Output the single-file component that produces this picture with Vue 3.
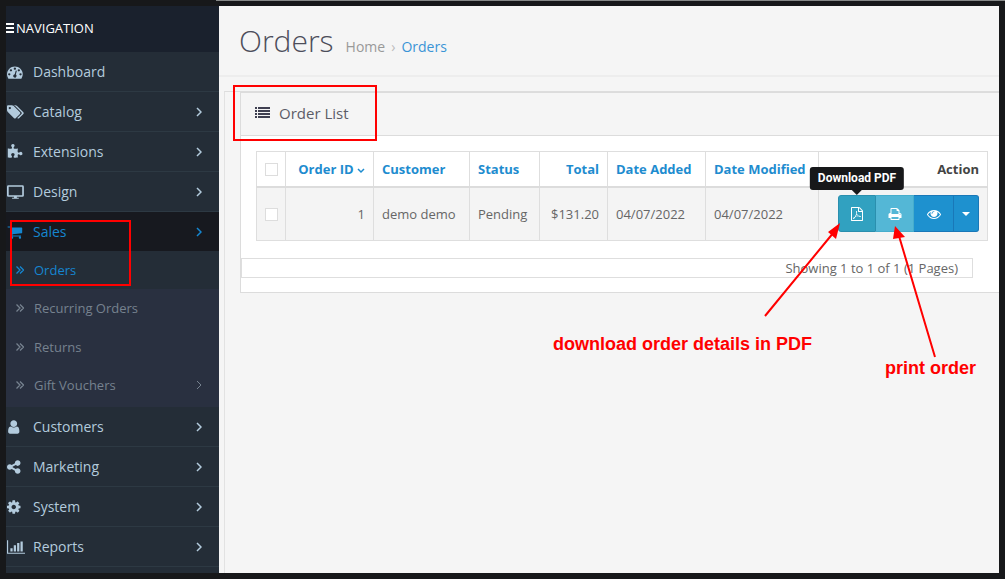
<script setup>
import { ref } from 'vue'

const icons = {
  dashboard: 'M384 1152q0-53-37.5-90.5t-90.5-37.5-90.5 37.5-37.5 90.5 37.5 90.5 90.5 37.5 90.5-37.5 37.5-90.5zm192-448q0-53-37.5-90.5t-90.5-37.5-90.5 37.5-37.5 90.5 37.5 90.5 90.5 37.5 90.5-37.5 37.5-90.5zm428 481l101-382q6-26-7.5-48.5t-38.5-29.5-48 6.5-30 39.5l-101 382q-60 5-107 43.5t-63 98.5q-20 77 20 146t117 89 146-20 89-117q16-60-6-117t-72-91zm660-33q0-53-37.5-90.5t-90.5-37.5-90.5 37.5-37.5 90.5 37.5 90.5 90.5 37.5 90.5-37.5 37.5-90.5zm-640-640q0-53-37.5-90.5t-90.5-37.5-90.5 37.5-37.5 90.5 37.5 90.5 90.5 37.5 90.5-37.5 37.5-90.5zm448 192q0-53-37.5-90.5t-90.5-37.5-90.5 37.5-37.5 90.5 37.5 90.5 90.5 37.5 90.5-37.5 37.5-90.5zm320 448q0 261-141 483-19 29-54 29h-1402q-35 0-54-29-141-221-141-483 0-182 71-348t191-286 286-191 348-71 348 71 286 191 191 286 71 348z',
  tags: 'M448 448q0-53-37.5-90.5t-90.5-37.5-90.5 37.5-37.5 90.5 37.5 90.5 90.5 37.5 90.5-37.5 37.5-90.5zm1067 576q0 53-37 90l-491 492q-39 37-91 37-53 0-90-37l-715-716q-38-37-64.5-101t-26.5-117v-416q0-52 38-90t90-38h416q53 0 117 26.5t102 64.5l715 714q37 39 37 91zm384 0q0 53-37 90l-491 492q-39 37-91 37-36 0-59-14t-53-45l470-470q37-37 37-90 0-52-37-91l-715-714q-38-38-102-64.5t-117-26.5h224q53 0 117 26.5t102 64.5l715 714q37 39 37 91z',
  puzzle: 'M1755 1083q0 81-44.5 135t-123.5 54q-41 0-77.5-17.5t-59-38-56.5-38-71-17.5q-110 0-110 124 0 39 16 115t15 115v5q-22 0-33 1-34 3-97.5 11.5t-115.5 13.5-98 5q-61 0-103-26.5t-42-83.5q0-37 17.5-71t38-56.5 38-59 17.5-77.5q0-79-54-123.5t-135-44.5q-84 0-143 45.5t-59 127.5q0 43 15 83t33.5 64.5 33.5 53 15 50.5q0 45-46 89-37 35-117 35-95 0-245-24-9-2-27.5-4t-27.5-4l-13-2q-1 0-3-1-2 0-2-1v-1024q2 1 17.5 3.5t34 5 21.5 3.5q150 24 245 24 80 0 117-35 46-44 46-89 0-22-15-50.5t-33.5-53-33.5-64.5-15-83q0-82 59-127.5t144-45.5q80 0 134 44.5t54 123.5q0 41-17.5 77.5t-38 59-38 56.5-17.5 71q0 57 42 83.5t103 26.5q64 0 180-15t163-17v2q-1 2-3.5 17.5t-5 34-3.5 21.5q-24 150-24 245 0 80 35 117 44 46 89 46 22 0 50.5-15t53-33.5 64.5-33.5 83-15q82 0 127.5 59t45.5 143z',
  desktop: 'M192 300v960h1536v-960zM160 128h1600q160 0 160 160v992q0 160-160 160h-640v120h220v104h-760v-104h220v-120h-640q-160 0-160-160v-992q0-160 160-160z',
  cart: 'M704 1536q0 52-38 90t-90 38-90-38-38-90 38-90 90-38 90 38 38 90zm896 0q0 52-38 90t-90 38-90-38-38-90 38-90 90-38 90 38 38 90zm128-1088v512q0 24-16.5 42.5t-40.5 21.5l-1044 122q13 60 13 70 0 16-24 64h920q26 0 45 19t19 45-19 45-45 19h-1024q-26 0-45-19t-19-45q0-11 8-31.5t16-36 21.5-40 15.5-29.5l-177-823h-204q-26 0-45-19t-19-45 19-45 45-19h256q16 0 28.5 6.5t19.5 15.5 13 24.5 8 26 5.5 29.5 4.5 26h1201q26 0 45 19t19 45z',
  user: 'M1408 1399q0 109-62.5 187t-150.5 78h-854q-88 0-150.5-78t-62.5-187q0-85 8.5-160.5t31.5-152 58.5-131 94-89 134.5-34.5q131 128 313 128t313-128q76 0 134.5 34.5t94 89 58.5 131 31.5 152 8.5 160.5zm-256-887q0 159-112.5 271.5t-271.5 112.5-271.5-112.5-112.5-271.5 112.5-271.5 271.5-112.5 271.5 112.5 112.5 271.5z',
  share: 'M1216 1024q133 0 226.5 93.5t93.5 226.5-93.5 226.5-226.5 93.5-226.5-93.5-93.5-226.5q0-12 2-34l-360-180q-92 86-218 86-133 0-226.5-93.5t-93.5-226.5 93.5-226.5 226.5-93.5q126 0 218 86l360-180q-2-22-2-34 0-133 93.5-226.5t226.5-93.5 226.5 93.5 93.5 226.5-93.5 226.5-226.5 93.5q-126 0-218-86l-360 180q2 22 2 34t-2 34l360 180q92-86 218-86z',
  cog: 'M1024 896q0-106-75-181t-181-75-181 75-75 181 75 181 181 75 181-75 75-181zm512-109v222q0 12-8 23t-20 13l-185 28q-19 54-39 91 35 50 107 138 10 12 10 25t-9 23q-27 37-99 108t-94 71q-12 0-26-9l-138-108q-44 23-91 38-16 136-29 186-7 28-36 28h-222q-14 0-24.5-8.5t-11.5-21.5l-28-184q-49-16-90-37l-141 107q-10 9-25 9-14 0-25-11-126-114-165-168-7-10-7-23 0-12 8-23 15-21 51-66.5t54-70.5q-27-50-41-99l-183-27q-13-2-21-12.5t-8-23.5v-222q0-12 8-23t19-13l186-28q14-46 39-92-40-57-107-138-10-12-10-24 0-10 9-23 26-36 98.5-107.5t94.5-71.5q13 0 26 10l138 107q44-23 91-38 16-136 29-186 7-28 36-28h222q14 0 24.5 8.5t11.5 21.5l28 184q49 16 90 37l142-107q9-9 24-9 13 0 25 10 129 119 165 170 7 8 7 22 0 12-8 23-15 21-51 66.5t-54 70.5q26 50 41 98l183 28q13 2 21 12.5t8 23.5z',
  chart: 'M0 128h128v1408h1920v128h-2048zM384 1024h256v384h-256zM768 704h256v704h-256zM1152 448h256v960h-256zM1536 256h256v1152h-256z',
  print: 'M448 1536h896v-256h-896v256zm0-640h896v-384h-160q-40 0-68-28t-28-68v-160h-640v640zm1152 64q0-26-19-45t-45-19-45 19-19 45 19 45 45 19 45-19 19-45zm128 0v416q0 13-9.5 22.5t-22.5 9.5h-224v160q0 40-28 68t-68 28h-960q-40 0-68-28t-28-68v-160h-224q-13 0-22.5-9.5t-9.5-22.5v-416q0-79 56.5-135.5t135.5-56.5h64v-544q0-40 28-68t68-28h672q40 0 88 20t76 48l152 152q28 28 48 76t20 88v256h64q79 0 135.5 56.5t56.5 135.5z',
  eye: 'M1664 960q-152-236-381-353 61 104 61 225 0 185-131.5 316.5t-316.5 131.5-316.5-131.5-131.5-316.5q0-121 61-225-229 117-381 353 133 205 333.5 326.5t434.5 121.5 434.5-121.5 333.5-326.5zm-720-384q0-20-14-34t-34-14q-125 0-214.5 89.5t-89.5 214.5q0 20 14 34t34 14 34-14 14-34q0-86 61-147t147-61q20 0 34-14t14-34zm848 384q0 34-20 69-140 230-376.5 368.5t-499.5 138.5-499.5-139-376.5-368q-20-35-20-69t20-69q140-229 376.5-368t499.5-139 499.5 139 376.5 368q20 35 20 69z',
  pdf: 'M1596 380q28 28 48 76t20 88v1152q0 40-28 68t-68 28h-1344q-40 0-68-28t-28-68v-1600q0-40 28-68t68-28h896q40 0 88 20t76 48zm-444-244v376h376q-10-29-22-41l-313-313q-12-12-41-22zm384 1528v-1024h-416q-40 0-68-28t-28-68v-416h-768v1536h1280zM1022 1071q33 26 84 56 59-7 117-7 147 0 177 49 16 22 2 52l-4 5q-6 38-71 38-48 0-115-20t-130-53q-221 24-392 83-153 262-242 262-15 0-28-7l-30-17q-10-10-6-36 9-40 56-91.5t132-96.5q14-9 23 6l2 4q52-85 107-197 68-136 104-262-24-82-30.5-159.5t6.5-127.5q11-40 42-40h22q23 0 35 15 18 21 9 68l-3 46q-2 123-14 192 55 164 146 238zM740 1240q130-52 275-78-92-70-145-189-45 130-130 267z'
}

const menu = [
  { label: 'Dashboard', icon: 'dashboard' },
  { label: 'Catalog', icon: 'tags', more: true },
  { label: 'Extensions', icon: 'puzzle', more: true },
  { label: 'Design', icon: 'desktop', more: true },
  {
    label: 'Sales', icon: 'cart', more: true, active: true,
    children: [
      { label: 'Orders', active: true },
      { label: 'Recurring Orders' },
      { label: 'Returns' },
      { label: 'Gift Vouchers', more: true }
    ]
  },
  { label: 'Customers', icon: 'user', more: true },
  { label: 'Marketing', icon: 'share', more: true },
  { label: 'System', icon: 'cog', more: true },
  { label: 'Reports', icon: 'chart', more: true }
]

const orders = [
  { id: 1, customer: 'demo demo', status: 'Pending', total: '$131.20', added: '04/07/2022', modified: '04/07/2022' }
]
const allSelected = ref(false)
const selected = ref([])
</script>

<template>
  <div class="frame">
    <nav class="sidebar">
      <div class="nav-title">
        <svg class="bars" viewBox="0 0 8 10"><path d="M0 0h8v2H0zM0 4h8v2H0zM0 8h8v2H0z" /></svg>
        <span>NAVIGATION</span>
      </div>
      <ul class="menu">
        <li v-for="item in menu" :key="item.label">
          <a href="#" class="item" :class="{ active: item.active }">
            <svg class="item-icon" viewBox="0 0 2048 1792" preserveAspectRatio="xMinYMid meet"><path fill-rule="evenodd" :d="icons[item.icon]" /></svg>
            <span class="label">{{ item.label }}</span>
            <svg v-if="item.more" class="chevron" viewBox="0 0 6 10"><path d="M1 1l4 4-4 4" /></svg>
          </a>
          <ul v-if="item.children" class="submenu">
            <li v-for="sub in item.children" :key="sub.label">
              <a href="#" class="subitem" :class="{ active: sub.active }">
                <svg class="double" viewBox="0 0 8 8"><path d="M0.5 0.5l3.5 3.5-3.5 3.5M4 0.5l3.5 3.5-3.5 3.5" /></svg>
                <span class="label">{{ sub.label }}</span>
                <svg v-if="sub.more" class="chevron" viewBox="0 0 6 10"><path d="M1 1l4 4-4 4" /></svg>
              </a>
            </li>
          </ul>
        </li>
      </ul>
    </nav>

    <main class="content">
      <header class="page-header">
        <h1>Orders</h1>
        <div class="breadcrumb">
          <a href="#">Home</a>
          <span class="sep">›</span>
          <a href="#" class="current">Orders</a>
        </div>
      </header>

      <div class="container">
        <section class="panel">
          <div class="panel-heading">
            <svg class="list-icon" viewBox="0 0 15 12"><path d="M0 0h2v2H0zM3 0h12v2H3zM0 3h2v2H0zM3 3h12v2H3zM0 6h2v2H0zM3 6h12v2H3zM0 9h2v2H0zM3 9h12v2H3z" /></svg>
            <h2>Order List</h2>
          </div>
          <div class="table-wrap">
            <table>
              <colgroup>
                <col class="c-check"><col class="c-id"><col class="c-customer"><col class="c-status">
                <col class="c-total"><col class="c-added"><col class="c-modified"><col>
              </colgroup>
              <thead>
                <tr>
                  <th class="check"><input v-model="allSelected" type="checkbox" aria-label="Select all orders"></th>
                  <th class="right"><a href="#">Order ID <svg class="sort" viewBox="0 0 8 6"><path d="M1 1l3 3 3-3" /></svg></a></th>
                  <th><a href="#">Customer</a></th>
                  <th><a href="#">Status</a></th>
                  <th class="right"><a href="#">Total</a></th>
                  <th><a href="#">Date Added</a></th>
                  <th><a href="#">Date Modified</a></th>
                  <th class="right">Action</th>
                </tr>
              </thead>
              <tbody>
                <tr v-for="order in orders" :key="order.id">
                  <td class="check"><input v-model="selected" type="checkbox" :value="order.id" aria-label="Select order"></td>
                  <td class="right">{{ order.id }}</td>
                  <td>{{ order.customer }}</td>
                  <td>{{ order.status }}</td>
                  <td class="right">{{ order.total }}</td>
                  <td>{{ order.added }}</td>
                  <td>{{ order.modified }}</td>
                  <td class="actions">
                    <div class="group">
                      <button type="button" class="btn pdf" aria-describedby="pdf-tip">
                        <svg viewBox="0 0 1792 1792"><path fill-rule="evenodd" :d="icons.pdf" /></svg>
                        <span id="pdf-tip" class="tooltip" role="tooltip">Download PDF</span>
                      </button>
                      <button type="button" class="btn print" aria-label="Print"><svg viewBox="0 0 1792 1792"><path :d="icons.print" /></svg></button>
                      <button type="button" class="btn view" aria-label="View"><svg viewBox="0 0 1792 1792"><path :d="icons.eye" /></svg></button>
                      <button type="button" class="btn toggle" aria-label="More"><svg viewBox="0 0 8 4"><path d="M0 0h8l-4 4z" /></svg></button>
                    </div>
                  </td>
                </tr>
              </tbody>
            </table>
          </div>
          <div class="results">Showing 1 to 1 of 1 (1 Pages)</div>
        </section>
      </div>
    </main>

    <div class="mark mark-list"></div>
    <div class="mark mark-sales"></div>
    <svg class="arrows" width="230" height="150" viewBox="0 0 230 150">
      <path class="line" d="M5 96L74 12M175 137L139 16" />
      <path class="head" d="M80 3L76 19L68 12ZM135 6L145 17L133 19Z" />
    </svg>
    <p class="note note-pdf">download order details in PDF</p>
    <p class="note note-print">print order</p>
  </div>
</template>

<style>
body { margin: 0; background: #17181a; }
</style>

<style scoped>
* { box-sizing: border-box; }
a { color: inherit; text-decoration: none; }
ul { list-style: none; margin: 0; padding: 0; }
.frame {
  position: relative;
  display: flex;
  min-height: 100vh;
  border: 6px solid #17181a;
  background: #f5f5f5;
  color: #666;
  font: 13px/20px "Open Sans", "Noto Sans", sans-serif;
}
.frame::before {
  content: "";
  position: absolute;
  top: -6px;
  right: -6px;
  left: 210px;
  height: 1px;
  background: #868888;
}
.sidebar { flex: 0 0 213px; background: #242d37; color: #b3cbdd; }
.nav-title {
  display: flex;
  align-items: center;
  gap: 2px;
  height: 46px;
  padding-bottom: 3px;
  background: #1a212d;
  color: #fff;
}
.bars { width: 8px; height: 10px; fill: #fff; }
.item {
  display: flex;
  align-items: center;
  height: 40px;
  padding: 1px 17px 0 1px;
  border-bottom: 1px solid #2d3943;
  font-size: 14px;
}
.item.active { height: 39px; border: 0; background: #17191f; color: #1586d0; }
.item-icon { flex: none; width: 18px; height: 16px; margin-right: 8px; fill: currentColor; }
.label { flex: 1; }
.chevron { width: 6px; height: 10px; fill: none; stroke: currentColor; stroke-width: 1.5; }
.submenu { display: grid; grid-template-rows: repeat(4, 1fr); height: 156px; padding-bottom: 3px; background: #293040; }
.subitem { display: flex; align-items: center; height: 100%; padding: 0 17px 0 10px; color: #76828f; }
.subitem.active { background: #242d37; color: #1586d0; }
.double { width: 8px; height: 8px; margin-right: 10px; fill: none; stroke: currentColor; stroke-width: 1.3; }
.subitem .chevron { stroke-width: 1; }

.content { flex: 1; min-width: 0; display: flex; flex-direction: column; }
.page-header {
  display: flex;
  align-items: baseline;
  gap: 12px;
  height: 71px;
  padding: 14px 20px 0;
  border-bottom: 2px solid #ededed;
}
h1 { margin: 0; color: #4c4d5a; font-size: 30px; font-weight: 300; line-height: 42px; }
.breadcrumb { display: flex; gap: 6px; color: #999; font-size: 14px; }
.sep { color: #bbb; }
.current { color: #3a94d6; }
.container {
  flex: 1;
  margin: 14px 0 0 5px;
  padding-left: 15px;
  border-top: 1px solid #ddd;
  border-left: 1px solid #e2e2e2;
}
.panel { border: 1px solid #dcdcdc; border-right: 0; background: #fff; }
.panel-heading {
  display: flex;
  align-items: center;
  gap: 9px;
  height: 43px;
  padding: 0 14px 3px;
  border-bottom: 1px solid #dcdcdc;
  background: #f5f5f5;
}
.list-icon { width: 15px; height: 12px; fill: #3f4051; }
h2 { margin: 0; color: #5c5d68; font-size: 15px; font-weight: 400; line-height: 20px; }
.table-wrap { padding: 15px 11px 17px 15px; }
table { width: 100%; table-layout: fixed; border-collapse: collapse; }
.c-check { width: 29px; }
.c-id { width: 88px; }
.c-customer { width: 96px; }
.c-status { width: 70px; }
.c-total { width: 68px; }
.c-added { width: 98px; }
.c-modified { width: 113px; }
th, td { padding: 8px; border: 1px solid #dedede; text-align: left; white-space: nowrap; font-weight: 400; }
th { height: 35px; padding: 7px 8px; border-bottom: 2px solid #dcdcdc; color: #444; font-weight: 700; }
th a { color: #1e8ccf; }
td { padding-top: 7px; background: #f4f4f4; }
.right, .actions { text-align: right; }
.check { padding: 0; text-align: center; }
.check input {
  appearance: none;
  display: block;
  width: 13px;
  height: 13px;
  margin: 0 auto;
  border: 1px solid #ddd;
  background: #fff;
}
.sort { width: 8px; height: 6px; fill: none; stroke: currentColor; stroke-width: 1.5; }
.group { display: inline-flex; vertical-align: top; }
.btn {
  position: relative;
  display: flex;
  align-items: center;
  justify-content: center;
  width: 38px;
  height: 37px;
  padding: 0;
  border: 1px solid #1978b8;
  border-left: 0;
  background: #1e91cf;
  color: #fff;
}
.btn svg { width: 14px; height: 14px; fill: #fff; }
.pdf { border: 1px solid #2a8fae; border-radius: 3px 0 0 3px; background: #31a1c0; }
.print { border-color: #46adcc; background: #54b7d6; }
.view { width: 40px; }
.toggle { width: 25px; border-radius: 0 3px 3px 0; }
.btn.toggle svg { width: 8px; height: 4px; }
.tooltip {
  position: absolute;
  bottom: calc(100% + 6px);
  left: 50%;
  transform: translateX(-50%);
  padding: 3px 8px;
  border-radius: 3px;
  background: #17181a;
  font: 700 12px/17px Roboto, "Liberation Sans", sans-serif;
  white-space: nowrap;
}
.tooltip::after {
  content: "";
  position: absolute;
  top: 100%;
  left: 50%;
  margin-left: -5px;
  border: 5px solid transparent;
  border-top-color: #17181a;
  border-bottom: 0;
}
.results {
  height: 20px;
  margin: 0 26px 14px 0;
  padding-right: 14px;
  border: 1px solid #dedede;
  line-height: 18px;
  text-align: right;
}

/* Annotations laid over the page */
.mark { position: absolute; border: 2px solid #f00; }
.mark-list { top: 79px; left: 227px; width: 144px; height: 56px; }
.mark-sales { top: 214px; left: 4px; width: 121px; height: 66px; }
.arrows { position: absolute; top: 214px; left: 754px; }
.line { stroke: #f00; stroke-width: 2; fill: none; }
.head { fill: #f00; }
.note { position: absolute; margin: 0; color: #f00; font: 700 18px/20px "Liberation Sans", Arial, sans-serif; white-space: nowrap; }
.note-pdf { top: 328px; left: 547px; }
.note-print { top: 352px; left: 879px; }
</style>
